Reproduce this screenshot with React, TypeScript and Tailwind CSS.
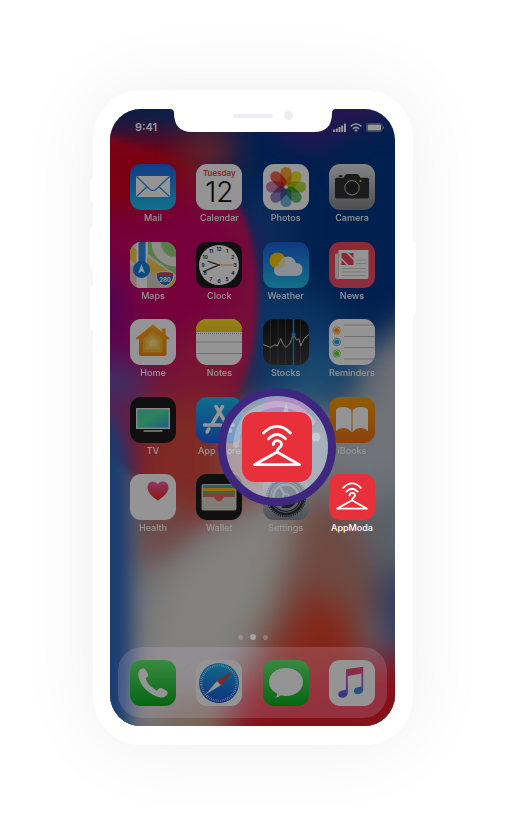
import type { ReactNode } from 'react';

type GradientProps = { id: string; from: string; to: string };

function Fade({ id, from, to }: GradientProps) {
  return (
    <linearGradient id={id} x1="0" y1="0" x2="0" y2="1">
      <stop offset="0" stopColor={from} />
      <stop offset="1" stopColor={to} />
    </linearGradient>
  );
}

function Glyph({ children }: { children: ReactNode }) {
  return (
    <svg viewBox="0 0 46 46" className="block h-full w-full" aria-hidden="true">
      {children}
    </svg>
  );
}

function MailIcon() {
  return (
    <Glyph>
      <Fade id="mail" from="#2065e8" to="#19c4f0" />
      <rect width="46" height="46" fill="url(#mail)" />
      <rect x="6" y="12" width="34" height="21" rx="1.5" fill="#fff" />
      <path d="M6.500 12.500 19.500 25q3.500 3 7 0L39.500 12.500M6.500 32.500 17 22.800M39.500 32.500 29 22.800" fill="none" stroke="#2a90ea" strokeWidth="1.200" />
    </Glyph>
  );
}

function CalendarIcon() {
  return (
    <span className="flex h-full w-full flex-col items-center bg-white">
      <span className="h-[14px] pt-1 text-[8px] leading-[10px] font-semibold text-[#f0433a]">Tuesday</span>
      <span className="text-[28px] leading-[28px] font-light text-black">12</span>
    </span>
  );
}

const petals = ['#f8a22c', '#efe026', '#b3d835', '#5fba72', '#68b0dc', '#8d7dc0', '#cf7fb4', '#f05a48'];

function PhotosIcon() {
  return (
    <Glyph>
      <rect width="46" height="46" fill="#fff" />
      {petals.map((color, i) => (
        <rect key={color} x="17.500" y="3" width="11" height="18.500" rx="5.500" fill={color} fillOpacity="0.95" transform={`rotate(${i * 45} 23 23)`} className="mix-blend-multiply" />
      ))}
      <circle cx="23" cy="23" r="1.200" fill="#fff" />
    </Glyph>
  );
}

function CameraIcon() {
  return (
    <Glyph>
      <Fade id="camera" from="#e2e3e6" to="#86878c" />
      <rect width="46" height="46" fill="url(#camera)" />
      <path d="M6 15.500q0-1.700 1.700-1.700h6.800l2-3q.5-.8 1.500-.8h10q1 0 1.500.8l2 3h6.800q1.700 0 1.700 1.700v17.300q0 1.700-1.700 1.700H7.700Q6 34.500 6 32.800z" fill="#2e2e31" />
      <rect x="9.500" y="11.300" width="4" height="1.600" rx=".6" fill="#2e2e31" />
      <circle cx="23" cy="23.800" r="7.200" fill="#27272a" stroke="#c8c8ca" strokeWidth="1" />
      <circle cx="31.500" cy="17" r="1.100" fill="#ffc400" />
    </Glyph>
  );
}

function MapsIcon() {
  return (
    <Glyph>
      <rect width="46" height="46" fill="#eeeae0" />
      <path d="M18 0h28v33L18 12z" fill="#8fd67c" />
      <circle cx="46" cy="0" r="20" fill="none" stroke="#f4f1e9" strokeWidth="9" />
      <circle cx="46" cy="0" r="15" fill="none" stroke="#dcd8cd" strokeWidth=".8" />
      <path d="M0 24h9v22H0z" fill="#f6c6cf" />
      <path d="M0 4l46 31v11h-7L0 17z" fill="#fbcf4b" stroke="#eeb325" strokeWidth=".7" />
      <path d="M6.500 0h11v46h-11z" fill="#fff" />
      <path d="M17 22 46 43v3H17z" fill="#d8d4cc" />
      <path d="M17 15.500 46 35v11h-4L17 27z" fill="#fbcf4b" />
      <path d="M8.500 0h7v27h-7z" fill="#2b8ee0" />
      <circle cx="11.500" cy="27.500" r="8.200" fill="#0d80e4" stroke="#2069b8" strokeWidth=".6" />
      <path d="m11.500 22 3.500 9.500-3.500-2.300L8 31.500z" fill="#fff" />
      <path d="M27 30.500q8-1.500 16 0 .8 2 .5 5-1 6-8.500 8.500-7.500-2.500-8.500-8.500-.3-3 .5-5z" fill="#1d78c8" stroke="#fff" strokeWidth="1" />
      <path d="M27.200 31q7.800-1.500 15.600 0l.5 3H26.700z" fill="#e23b45" />
      <text x="35" y="40" textAnchor="middle" fontSize="6" fontWeight="700" fill="#fff">280</text>
    </Glyph>
  );
}

const hours = [12, 1, 2, 3, 4, 5, 6, 7, 8, 9, 10, 11];

function ClockIcon() {
  return (
    <Glyph>
      <rect width="46" height="46" fill="#1c1c1e" />
      <circle cx="23" cy="23" r="20" fill="#fff" />
      {hours.map((hour, i) => (
        <text
          key={hour}
          x={23 + 16 * Math.sin((i * Math.PI) / 6)}
          y={24.8 - 16 * Math.cos((i * Math.PI) / 6)}
          textAnchor="middle"
          fontSize="5"
          fontWeight="600"
          fill="#111"
        >
          {hour}
        </text>
      ))}
      <path d="M23 23 12 19.300M23 23 7.500 29.500" stroke="#111" strokeWidth="1.200" strokeLinecap="round" />
      <path d="M19 23h20" stroke="#f08a18" strokeWidth=".7" />
      <circle cx="23" cy="23" r="1.100" fill="#a55b10" />
    </Glyph>
  );
}

function WeatherIcon() {
  return (
    <Glyph>
      <Fade id="weather" from="#1c5fe2" to="#1ec2ee" />
      <rect width="46" height="46" fill="url(#weather)" />
      <circle cx="14.500" cy="18.500" r="8" fill="#fdc80a" />
      <path d="M17 34q-6-.5-6-5.500 0-4.800 5-5.500 1.500-8.500 9-8.500 6 0 8 6.500 6.500.2 6.500 6.500T33 34z" fill="#eef3fa" />
      <path d="M12 26q1-2.600 4-3 1-5 5-7.300 1.500 1.300 1.400 4-.4 6.300-6.400 6.800z" fill="#f6e7a6" opacity=".8" />
    </Glyph>
  );
}

function NewsIcon() {
  return (
    <Glyph>
      <Fade id="news" from="#f5475f" to="#f04f67" />
      <rect width="46" height="46" fill="url(#news)" />
      <path d="M6 12.500q0-1 1-1h4V37H8q-2 0-2-2z" fill="#e5e3e5" />
      <path d="M9.500 8h30v27q0 2-2 2H8q1.500-.5 1.500-2z" fill="#fff" />
      <path d="M9.500 9v26" stroke="#c9c4c8" strokeWidth=".8" />
      <path d="M12.500 11h4.800L24.500 18.200V23h-4.800l-7.200-7.200zM19.500 11h5v5zM12.500 18v5h5z" fill="#f2425b" />
      <path d="M27 18h10M27 21.500h10M12.500 26.500H37M12.500 30H37M12.500 33.500H37" stroke="#c7c7cb" strokeWidth=".8" />
    </Glyph>
  );
}

function HomeIcon() {
  return (
    <Glyph>
      <Fade id="home" from="#ffa51e" to="#f58c0a" />
      <rect width="46" height="46" fill="#fff" />
      <path d="m22.800 5.500 9 7.300V9.500h3.700v6.300l4 3.200v1.200h-3V35q0 2-2 2H11q-2 0-2-2V20.200H6V19z" fill="url(#home)" />
      <path d="m22.800 12 9.700 7.800v13.400H13V19.800z" fill="#ffb638" />
      <path d="m22.800 16 6.700 5.400v8.800H16v-8.800z" fill="#ffcc58" />
      <path d="m22.800 19.500 3.800 3.200v4.800H19v-4.800z" fill="#ffe48a" />
    </Glyph>
  );
}

function NotesIcon() {
  return (
    <Glyph>
      <Fade id="notes" from="#ffe02c" to="#fccb12" />
      <rect width="46" height="46" fill="#fff" />
      <rect width="46" height="12" fill="url(#notes)" />
      <path d="M0 12.500h46M0 23h46M0 34.500h46" stroke="#bdbdc0" strokeWidth=".9" />
      <path d="M0 14.500h46" stroke="#aaa" strokeWidth=".9" strokeDasharray="1 1" />
    </Glyph>
  );
}

function StocksIcon() {
  return (
    <Glyph>
      <Fade id="stocks" from="#141416" to="#3a3a3c" />
      <rect width="46" height="46" fill="url(#stocks)" />
      <path d="M7.500 0v46M15 0v46M22.500 0v46M37.500 0v46" stroke="#4d4d50" strokeWidth=".8" />
      <path d="M30.500 0v46" stroke="#159cd8" strokeWidth="1.500" />
      <path d="m0 25.700 7.700 2.600 4.300-2.600 2.300 1.300 3.400-7.300 2.600 6L23 28.300l4-3.600 1.300-4 2.200-5.400 3.200 6L36 19.700l1.700 7.300 3.300-7.300 5-4.200" fill="none" stroke="#e4e4e6" strokeWidth=".9" />
      <circle cx="30.500" cy="15.500" r="2" fill="#14a4ee" />
    </Glyph>
  );
}

function RemindersIcon() {
  const bullets: [number, string][] = [[11.500, '#fb9a1c'], [23, '#25a4ec'], [34.500, '#60d838']];
  return (
    <Glyph>
      <rect width="46" height="46" fill="#fff" />
      <path d="M15 6h31M15 17.500h31M15 28.500h31M15 40h31" stroke="#b9b9bd" strokeWidth=".9" />
      {bullets.map(([cy, color]) => (
        <g key={color}>
          <circle cx="7.700" cy={cy} r="3.700" fill="none" stroke={color} strokeWidth=".8" />
          <circle cx="7.700" cy={cy} r="2.500" fill={color} />
        </g>
      ))}
    </Glyph>
  );
}

function TvIcon() {
  return (
    <Glyph>
      <linearGradient id="tv" x1="0" y1="0" x2="1" y2="1">
        <stop offset="0" stopColor="#58c8b8" />
        <stop offset=".45" stopColor="#4be3a0" />
        <stop offset="1" stopColor="#3a9ce0" />
      </linearGradient>
      <rect width="46" height="46" fill="#1c1c1d" />
      <rect x="6.700" y="11.700" width="32.600" height="19.600" fill="url(#tv)" stroke="#e8e8e8" strokeWidth="1.400" />
      <path d="M13.500 34h19" stroke="#e8e8e8" strokeWidth="1.400" />
    </Glyph>
  );
}

function AppStoreIcon() {
  return (
    <Glyph>
      <Fade id="appstore" from="#1bbdf2" to="#1e62e6" />
      <rect width="46" height="46" fill="url(#appstore)" />
      <path d="M26.500 9.500 15.500 28M20 9.500 34.500 34M12.800 32l-1.800 3M8.500 28H25M33.500 28H37" fill="none" stroke="#fff" strokeWidth="3.500" strokeLinecap="round" />
    </Glyph>
  );
}

function StoreIcon() {
  return (
    <Glyph>
      <Fade id="itunes" from="#e04fd8" to="#b94ff0" />
      <rect width="46" height="46" fill="url(#itunes)" />
      <path d="m23 6 4 13 12 .5-9.500 8 3.500 12L23 32.500 12.500 39.500l3.500-12-9.500-8 12.500-.5z" fill="#fff" />
    </Glyph>
  );
}

function BooksIcon() {
  return (
    <Glyph>
      <Fade id="books" from="#fb9e02" to="#ee741c" />
      <rect width="46" height="46" fill="url(#books)" />
      <path d="M22.500 14q-2-4-8-4-7 0-7.500 3.500V34q3.500-3.500 8-3 5 .3 7.500 4.500zM23.500 14q2-4 8-4 7 0 7.500 3.500V34q-3.500-3.500-8-3-5 .3-7.500 4.500z" fill="#fff" />
    </Glyph>
  );
}

function HealthIcon() {
  return (
    <Glyph>
      <Fade id="health" from="#ff5bb4" to="#ee2a14" />
      <rect width="46" height="46" fill="#fff" />
      <path d="M27.800 26.500C22 22.500 17.500 18.500 17.500 13.500c0-7 8-8 10.300-3 2.200-5 10.700-4 10.700 3 0 5-4.700 9-10.700 13z" fill="url(#health)" />
    </Glyph>
  );
}

function WalletIcon() {
  return (
    <Glyph>
      <rect width="46" height="46" fill="#1b1b1c" />
      <rect x="5.500" y="10" width="35" height="26.500" rx="2.500" fill="#dcd8cc" />
      <path d="M7 14v-1.500q0-1.500 1.500-1.500h29q1.500 0 1.500 1.500V14z" fill="#3d9fd8" />
      <path d="M7 14h32v3H7z" fill="#ffb81c" />
      <path d="M7 17h32v3H7z" fill="#5fb843" />
      <path d="M7 20h32v3H28.500c-1.500 0-2 4.500-5.500 4.500S19 23 17.500 23H7z" fill="#ed6a5f" />
    </Glyph>
  );
}

function SettingsIcon() {
  return (
    <Glyph>
      <Fade id="settings" from="#e0e2e6" to="#888b91" />
      <rect width="46" height="46" fill="url(#settings)" />
      <circle cx="23" cy="23" r="18.500" fill="#303136" />
      <circle cx="23" cy="23" r="19.300" fill="none" stroke="#303136" strokeWidth="1.600" strokeDasharray="1.200 1" />
      <circle cx="23" cy="23" r="15.500" fill="none" stroke="#8d9096" strokeWidth="1" />
      <circle cx="23" cy="23" r="12.500" fill="none" stroke="#a5a8ae" strokeWidth="2.400" />
      <path d="M23 23h12M23 23l-6 10.400M23 23l-6-10.400" stroke="#a5a8ae" strokeWidth="2.200" />
      <circle cx="23" cy="23" r="3" fill="#303136" stroke="#a5a8ae" strokeWidth="1.400" />
    </Glyph>
  );
}

function AppModaIcon() {
  return (
    <svg viewBox="0 0 70 70" className="block h-full w-full" aria-hidden="true">
      <rect width="70" height="70" fill="#e8303b" />
      <g fill="none" stroke="#fff" strokeWidth="2.800" strokeLinecap="round" strokeLinejoin="round">
        <path d="M21.500 21Q28 14.300 35 14.300T48.500 21M26.500 26.800q4.500-4.300 8.500-4.300t8.500 4.300" />
        <path d="M31.300 32.700c.2-5.600 8.300-5.200 8.200 0C39.400 36 35 35.500 35 40L12.500 52.700h45L35 40" />
      </g>
    </svg>
  );
}

function PhoneIcon() {
  return (
    <Glyph>
      <Fade id="phone" from="#64ee72" to="#09b01c" />
      <rect width="46" height="46" fill="url(#phone)" />
      <path d="M11.500 8.700c1.700-1 3-.6 4 1l2.300 4c.7 1.400.4 2.600-.8 3.600l-1.300 1.100c1.600 5 6.300 9.700 11.200 12l1.500-1.500c1.100-1.100 2.300-1.300 3.600-.6l4.400 2.500c1.300.8 1.700 2 .9 3.400-1.800 3.200-4.700 4-8.200 3C18 34.500 9 24 8.200 14.500c-.2-2.700 1-4.700 3.300-5.800z" fill="#fff" />
    </Glyph>
  );
}

function SafariIcon() {
  return (
    <Glyph>
      <Fade id="safari" from="#1db4ee" to="#1a58d8" />
      <rect width="46" height="46" fill="#fff" />
      <circle cx="23" cy="23" r="20" fill="url(#safari)" />
      <circle cx="23" cy="23" r="17.700" fill="none" stroke="#fff" strokeWidth="2.400" strokeDasharray=".5 1.350" />
      <path d="M36.500 11.500 24.800 25.200 21 21z" fill="#f33c30" />
      <path d="M9.500 34.500 21 21l3.800 4.200z" fill="#fff" />
    </Glyph>
  );
}

function MessagesIcon() {
  return (
    <Glyph>
      <Fade id="messages" from="#64ee72" to="#09b01c" />
      <rect width="46" height="46" fill="url(#messages)" />
      <path d="M23 8c9.500 0 17 6 17 14s-7.500 14-17 14q-2.500 0-5-.7-2.500 2-5.700 2.500 1.700-1.800 1.900-4.400C9 31 6 26.800 6 22 6 14 13.500 8 23 8z" fill="#fff" />
    </Glyph>
  );
}

function MusicIcon() {
  return (
    <Glyph>
      <linearGradient id="music" gradientUnits="userSpaceOnUse" x1="24" y1="8" x2="22" y2="38">
        <stop offset="0" stopColor="#fb4a66" />
        <stop offset=".45" stopColor="#b25bb8" />
        <stop offset="1" stopColor="#4b63f0" />
      </linearGradient>
      <linearGradient id="musicRight" gradientUnits="userSpaceOnUse" x1="0" y1="8" x2="0" y2="35">
        <stop offset="0" stopColor="#f44a78" />
        <stop offset=".6" stopColor="#7a6ad0" />
        <stop offset="1" stopColor="#27a3ec" />
      </linearGradient>
      <rect width="46" height="46" fill="#fff" />
      <path d="M17 10.300q0-1 1-1.200L33 7v6.500L18.800 16V33c0 2.500-2 4.500-5 4.800-2.700.2-4.500-1.200-4.500-3.300 0-2 1.300-3.400 4-3.900l2.500-.6q1.200-.3 1.200-1.500z" fill="url(#music)" />
      <path d="M32.500 7h1.700v22.500c0 2.500-2 4.500-4.900 4.800-2.700.2-4.500-1.100-4.500-3.200s1.300-3.400 4-3.900l2.500-.5q1.200-.3 1.200-1.500V13z" fill="url(#musicRight)" />
    </Glyph>
  );
}

const apps: { name: string; icon: ReactNode; active?: boolean }[] = [
  { name: 'Mail', icon: <MailIcon /> },
  { name: 'Calendar', icon: <CalendarIcon /> },
  { name: 'Photos', icon: <PhotosIcon /> },
  { name: 'Camera', icon: <CameraIcon /> },
  { name: 'Maps', icon: <MapsIcon /> },
  { name: 'Clock', icon: <ClockIcon /> },
  { name: 'Weather', icon: <WeatherIcon /> },
  { name: 'News', icon: <NewsIcon /> },
  { name: 'Home', icon: <HomeIcon /> },
  { name: 'Notes', icon: <NotesIcon /> },
  { name: 'Stocks', icon: <StocksIcon /> },
  { name: 'Reminders', icon: <RemindersIcon /> },
  { name: 'TV', icon: <TvIcon /> },
  { name: 'App Store', icon: <AppStoreIcon /> },
  { name: '', icon: <StoreIcon /> },
  { name: 'iBooks', icon: <BooksIcon /> },
  { name: 'Health', icon: <HealthIcon /> },
  { name: 'Wallet', icon: <WalletIcon /> },
  { name: 'Settings', icon: <SettingsIcon /> },
  { name: 'AppModa', icon: <AppModaIcon />, active: true },
];

const dock = [
  { name: 'Phone', icon: <PhoneIcon /> },
  { name: 'Safari', icon: <SafariIcon /> },
  { name: 'Messages', icon: <MessagesIcon /> },
  { name: 'Music', icon: <MusicIcon /> },
];

function Wallpaper() {
  return (
    <svg viewBox="0 0 285 617" preserveAspectRatio="none" className="absolute inset-0 h-full w-full" aria-hidden="true">
      <filter id="soft" filterUnits="userSpaceOnUse" x="-100" y="-100" width="485" height="817" colorInterpolationFilters="sRGB"><feGaussianBlur stdDeviation="16" /></filter>
      <filter id="mid" filterUnits="userSpaceOnUse" x="-100" y="-100" width="485" height="817" colorInterpolationFilters="sRGB"><feGaussianBlur stdDeviation="10" /></filter>
      <filter id="crisp" filterUnits="userSpaceOnUse" x="-100" y="-100" width="485" height="817" colorInterpolationFilters="sRGB"><feGaussianBlur stdDeviation="3" /></filter>
      <rect width="285" height="617" fill="#00204f" />
      <g filter="url(#soft)">
        <path d="M130 80h50v130h-50z" fill="#0c2c5c" />
        <path d="M120 180h80l60 50-40 75-100 20z" fill="#0b3563" />
        <path d="M180 240h60l-10 65h-60z" fill="#1c4c70" />
        <path d="M330 190V700H-40V330L110 300l60-5 70 10 15-60z" fill="#707277" />
      </g>
      <g filter="url(#crisp)">
        <path d="M-20 20 95 60q27 20 40 50 16 45 12 100-3 40-17 65-8 30-8 50L60 400-20 330z" fill="#75103a" />
      </g>
      <g filter="url(#soft)">
        <path d="M-30 90H90l45 40-10 60-60 60-95 10z" fill="#75003c" />
        <path d="M-30 25H60q40 0 40 30L60 95-30 110z" fill="#7a0010" />
        <ellipse cx="98" cy="42" rx="28" ry="28" fill="#642029" />
        <path d="M-30-40H120V2L40-2-30 2z" fill="#0a2148" />
        <ellipse cx="95" cy="260" rx="38" ry="45" fill="#781533" />
        <ellipse cx="-8" cy="205" rx="24" ry="46" fill="#4c0757" />
        <ellipse cx="6" cy="275" rx="32" ry="26" fill="#3b3168" />
        <path d="M35 290h90l-5 110-45 35-55-60z" fill="#7f2a25" />
        <path d="M115 320h50v70l-50 30z" fill="#7b4a40" />
        <path d="M20 395h60v60H20z" fill="#6c4a48" />
        <ellipse cx="200" cy="18" rx="34" ry="12" fill="#4a0c50" />
        <ellipse cx="252" cy="-4" rx="30" ry="14" fill="#42104d" />
        <ellipse cx="265" cy="360" rx="40" ry="70" fill="#6f7278" />
      </g>
      <g filter="url(#soft)">
        <path d="M60 455l60-40 55-25 25 15-30 90-50 80-60 30H15l30-110z" fill="#82817e" />
        <path d="M188 390h50l35 80-20 80H135q45-70 53-160z" fill="#6e4a42" />
        <path d="M195 480l40 20 20 50-20 30H115q60-30 80-100z" fill="#85261a" />
        <path d="M255 390h60v80h-55z" fill="#56606a" />
        <path d="M268 465h50v80h-45z" fill="#2c3a60" />
        <path d="M125 585l90-15 40-20 80-5v115H110z" fill="#861019" />
        <path d="M50 590h70l-10 70H50z" fill="#776457" />
      </g>
      <g filter="url(#mid)">
        <path d="M-30 300 4 305q14 20 17 60v190l-2 100h-50z" fill="#193c70" />
      </g>
    </svg>
  );
}

function StatusBar() {
  return (
    <header className="relative flex h-9 items-center justify-between pr-[11px] pl-[25px] text-[#999999]">
      <time className="text-[11px] leading-4 font-semibold">9:41</time>
      <div className="flex items-center gap-1">
        <svg viewBox="0 0 13 9" className="h-[9px] w-[13px]" fill="currentColor" aria-hidden="true">
          <rect y="6.500" width="2" height="2.500" rx=".5" />
          <rect x="2.800" y="5.500" width="2" height="3.500" rx=".5" />
          <rect x="5.500" y="4" width="2" height="5" rx=".5" />
          <rect x="8.200" y="2.500" width="2" height="6.500" rx=".5" />
          <rect x="11" y=".5" width="2" height="8.500" rx=".5" />
        </svg>
        <svg viewBox="0 0 12 9" className="h-[9px] w-3" fill="none" stroke="currentColor" strokeWidth="1.500" aria-hidden="true">
          <path d="M.6 3.400q5.400-4.800 10.800 0M2.800 5.700q3.200-2.700 6.400 0" />
          <path d="m4.200 7 1.800 1.900L7.800 7Q6 5.700 4.200 7z" fill="currentColor" stroke="none" />
        </svg>
        <svg viewBox="0 0 18 9" className="h-[9px] w-[18px]" aria-hidden="true">
          <rect x=".4" y=".4" width="15.700" height="8.200" rx="2" fill="none" stroke="currentColor" strokeWidth=".8" opacity=".5" />
          <rect x="1.500" y="1.500" width="13.500" height="6" rx="1" fill="currentColor" />
          <path d="M17 3v3q1-.5 1-1.500T17 3z" fill="currentColor" opacity=".6" />
        </svg>
      </div>
      <div className="absolute inset-x-0 top-0 flex justify-center">
        <div className="relative h-[23px] w-[166px]">
          <svg viewBox="0 0 166 23" className="absolute inset-0 h-full w-full" aria-hidden="true">
            <path d="M0 0q4 0 4 4 0 19 18 19h122q18 0 18-19 0-4 4-4z" fill="#fff" />
          </svg>
          <div className="relative flex items-center justify-end gap-[11px] pt-[2px] pr-[43px]">
            <span className="h-1 w-10 rounded-full bg-[#ededf2]" />
            <span className="size-[9px] rounded-full bg-[#ededf2]" />
          </div>
        </div>
      </div>
    </header>
  );
}

function Magnifier() {
  return (
    <div className="absolute top-[279px] left-[108px] flex size-[118px] items-center justify-center rounded-full border-8 border-[#3f2780] bg-[#d3e4f2]/55">
      <svg viewBox="0 0 102 102" className="absolute inset-0 h-full w-full" aria-hidden="true">
        <path d="M10 49Q13 13 50 8q24 0 36 18" fill="none" stroke="#fff" strokeOpacity=".25" strokeWidth="6" strokeLinecap="round" />
        <circle cx="90" cy="41" r="4.500" fill="#fff" fillOpacity=".35" />
      </svg>
      <div className="relative size-[70px] overflow-hidden rounded-[13px]">
        <AppModaIcon />
      </div>
    </div>
  );
}

export default function App() {
  return (
    <main className="flex min-h-screen justify-center bg-white pt-[90px] pb-[90px] font-['Inter',sans-serif]">
      <div className="relative w-80 self-start rounded-[48px] bg-white pt-[19px] pr-[18px] pb-[19px] pl-[17px] shadow-[0_0_80px_rgba(0,0,0,0.07)]">
        <span className="absolute top-[88px] -left-[3px] h-6 w-1 rounded-l bg-white" />
        <span className="absolute top-[135px] -left-[3px] h-[47px] w-1 rounded-l bg-white" />
        <span className="absolute top-[195px] -left-[3px] h-[46px] w-1 rounded-l bg-white" />
        <span className="absolute top-[151px] -right-[3px] h-[74px] w-1 rounded-r bg-white" />

        <div className="relative isolate overflow-hidden rounded-[31px] pb-2">
          <Wallpaper />
          <StatusBar />

          <div className="relative mt-[19px] grid h-[372px] grid-cols-[repeat(4,46px)] content-between justify-between px-5">
            {apps.map((app) => (
              <button
                key={app.name}
                type="button"
                className={app.active ? 'flex flex-col items-center text-white' : 'flex flex-col items-center text-white brightness-[.58]'}
              >
                <span className="size-[46px] overflow-hidden rounded-[11px]">{app.icon}</span>
                <span className="h-4 text-[9px] leading-4 font-medium whitespace-nowrap">{app.name}</span>
              </button>
            ))}
          </div>

          <div className="relative mt-[98px] flex h-[6px] items-center justify-center gap-[7px]">
            <span className="size-[5px] rounded-full bg-white/20" />
            <span className="size-[6px] rounded-full bg-[#a3a6a6]" />
            <span className="size-[5px] rounded-full bg-white/20" />
          </div>

          <nav className="relative mx-2 mt-[7px] flex h-[71px] items-center justify-between rounded-[24px] bg-[#d8c8e8]/18 px-3">
            {dock.map((app) => (
              <button key={app.name} type="button" aria-label={app.name} className="size-[46px] overflow-hidden rounded-[11px] brightness-[.58]">
                {app.icon}
              </button>
            ))}
          </nav>

          <Magnifier />
        </div>
      </div>
    </main>
  );
}
